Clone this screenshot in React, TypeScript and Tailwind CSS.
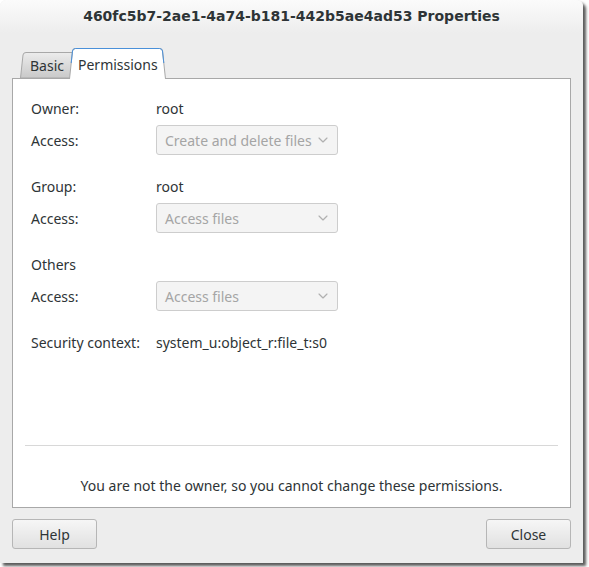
import { ChevronDown } from "lucide-react";

const font = { fontFamily: '"Noto Sans", "DejaVu Sans", sans-serif' };

function Combo({ text }: { text: string }) {
    return (
        <div className="w-[182px] h-[30px] flex items-center justify-between pl-[8px] pr-[6px] rounded-[3px] border border-[#cdcdcd] bg-[#f4f4f4] text-[#a5a5a5] text-[14px]">
            <span>{text}</span>
            <ChevronDown size={16} strokeWidth={1.75} className="text-[#b0b0b0]" />
        </div>
    );
}

function Row({ label, children }: { label: string; children: React.ReactNode }) {
    return (
        <div className="h-[30px] flex items-center text-[14px] text-[#2e3436]">
            <div className="w-[125px]">{label}</div>
            {children}
        </div>
    );
}

export default function App() {
    return (
        <div className="w-[589px] h-[567px] bg-white" style={font}>
            <div className="w-[583px] h-[563px] rounded-t-[6px] bg-[#ededed] shadow-[3px_3px_3px_rgba(0,0,0,0.65)] flex flex-col">
                {/* title bar */}
                <div className="h-[33px] rounded-t-[6px] bg-gradient-to-b from-[#fbfbfb] to-[#ededed] flex items-center justify-center">
                    <span
                        className="text-[14px] font-bold text-[#2e3436]"
                        style={{ fontFamily: '"DejaVu Sans", sans-serif' }}
                    >
                        460fc5b7-2ae1-4a74-b181-442b5ae4ad53 Properties
                    </span>
                </div>

                <div className="pt-[15px] px-[12px]">
                    {/* tabs */}
                    <div className="h-[30px] relative flex items-end">
                        <div className="relative ml-[8px] h-[26px] w-[56px] flex items-center">
                            <svg className="absolute inset-0" width="56" height="26" viewBox="0 0 56 26">
                                <defs>
                                    <linearGradient id="g1" x1="0" y1="0" x2="0" y2="1">
                                        <stop offset="0" stopColor="#ececec" />
                                        <stop offset="1" stopColor="#c9c9c9" />
                                    </linearGradient>
                                </defs>
                                <path d="M0.5 26 L3 3 Q3.3 0.5 6 0.5 L56 0.5 L56 26 Z" fill="url(#g1)" stroke="#a8a8a8" />
                            </svg>
                            <span className="relative pl-[10px] text-[14px] text-[#2e3436]">Basic</span>
                        </div>
                        <div className="relative -ml-[7px] h-[31px] w-[97px] flex items-center mb-[-1px] z-10">
                            <svg className="absolute inset-0" width="97" height="31" viewBox="0 0 97 31">
                                <path d="M0.5 31 L3.5 3 Q3.8 0.5 6.5 0.5 L90.5 0.5 Q93.2 0.5 93.5 3 L96.5 31" fill="#ffffff" stroke="#a8a8a8" />
                                <path d="M2.2 15 L3.5 3 Q3.8 0.5 6.5 0.5 L90.5 0.5 Q93.2 0.5 93.5 3 L94.8 15" fill="none" stroke="#4a90d9" />
                            </svg>
                            <span className="relative pl-[9px] pt-[2px] text-[14px] text-[#2e3436]">Permissions</span>
                        </div>
                    </div>

                    {/* page */}
                    <div className="h-[430px] bg-white border border-[#a8a8a8] flex flex-col">
                        <div className="pt-[14px] pl-[18px] flex flex-col gap-[16px]">
                            <div className="flex flex-col gap-[2px]">
                                <Row label="Owner:">
                                    <span>root</span>
                                </Row>
                                <Row label="Access:">
                                    <Combo text="Create and delete files" />
                                </Row>
                            </div>
                            <div className="flex flex-col gap-[2px]">
                                <Row label="Group:">
                                    <span>root</span>
                                </Row>
                                <Row label="Access:">
                                    <Combo text="Access files" />
                                </Row>
                            </div>
                            <div className="flex flex-col gap-[2px]">
                                <Row label="Others">{null}</Row>
                                <Row label="Access:">
                                    <Combo text="Access files" />
                                </Row>
                            </div>
                            <Row label="Security context:">
                                <span>system_u:object_r:file_t:s0</span>
                            </Row>
                        </div>
                        <div className="flex-1" />
                        <div className="mx-[12px] h-px bg-[#d8d8d8]" />
                        <div className="h-[61px] pb-[11px] flex items-end justify-center">
                            <span className="text-[14px] text-[#2e3436]">
                                You are not the owner, so you cannot change these permissions.
                            </span>
                        </div>
                    </div>

                    {/* buttons */}
                    <div className="mt-[11px] flex justify-between">
                        <button className="w-[85px] h-[30px] pt-[1px] rounded-[3px] border border-[#b6b6b6] bg-gradient-to-b from-[#f6f6f6] to-[#e1e1e1] text-[14px] text-[#2e3436]">
                            Help
                        </button>
                        <button className="w-[85px] h-[30px] pt-[1px] rounded-[3px] border border-[#b6b6b6] bg-gradient-to-b from-[#f6f6f6] to-[#e1e1e1] text-[14px] text-[#2e3436]">
                            Close
                        </button>
                    </div>
                </div>
            </div>
        </div>
    );
}
